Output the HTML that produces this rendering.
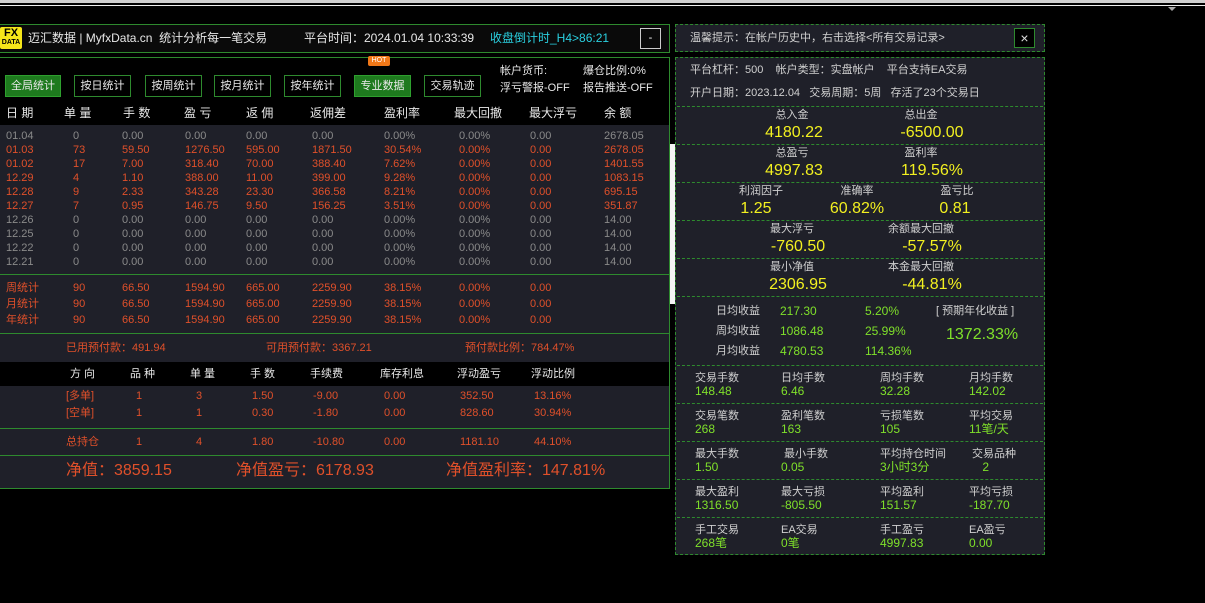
<!DOCTYPE html>
<html><head><meta charset="utf-8"><style>
*{margin:0;padding:0;box-sizing:border-box}
body{width:1205px;height:603px;background:#000;position:relative;overflow:hidden;font-family:"Liberation Sans","Noto Sans CJK SC",sans-serif;font-size:11px;color:#ddd}
.a{position:absolute;white-space:nowrap;line-height:1}
.g{color:#8a8a8a}.r{color:#e0502a}.w{color:#e8e8e8}.y{color:#f2f020}.gr{color:#7fe02a}.l{color:#d0d0d0}
.btn{position:absolute;top:75px;height:22px;width:57px;border:1px solid #2e8a2e;color:#e8e8e8;font-size:11px;text-align:center;line-height:20px;background:#000}
.btn.on{background:#1e7a1e;border-color:#2ea02e}
.hl{position:absolute;left:0;width:669px;height:1px;background:#2e8a2e}
.dl{position:absolute;left:677px;width:366px;border-top:1px dashed #2e8a2e;height:0}
.c{transform:translateX(-50%)}
</style></head><body>
<div class="a" style="left:0;top:0;width:1205px;height:3px;background:#cfcfcf"></div>
<div class="a" style="left:0;top:5px;width:1205px;height:1px;background:#eee"></div>
<div class="a" style="left:1168px;top:7px;width:0;height:0;border-left:4px solid transparent;border-right:4px solid transparent;border-top:4px solid #aaa"></div>

<div class="a" style="left:0;top:24px;width:670px;height:29px;border:1px solid #2e8a2e;border-left:none;background:#0a0a0a"></div>
<div class="a" style="left:0;top:27px;width:22px;height:22px;background:#f5e61a;border-radius:2px;color:#000;font-weight:bold;text-align:center">
<div style="font-size:11px;line-height:11px;margin-top:1px">FX</div><div style="font-size:7px;line-height:8px">DATA</div></div>
<div class="a w" style="left:28px;top:32px;font-size:12px">迈汇数据 | MyfxData.cn &nbsp;统计分析每一笔交易</div>
<div class="a w" style="left:304px;top:32px;font-size:12px">平台时间：2024.01.04 10:33:39</div>
<div class="a" style="left:490px;top:32px;font-size:12px;color:#2ad0e0">收盘倒计时_H4&gt;86:21</div>
<div class="a" style="left:640px;top:28px;width:21px;height:21px;border:1px solid #ccc;color:#fff;text-align:center;line-height:19px">-</div>

<div class="a" style="left:0;top:57px;width:670px;height:44px;border:1px solid #2e8a2e;border-left:none;border-bottom:none;background:#000"></div>
<div class="btn on" style="left:5px;width:56px">全局统计</div>
<div class="btn" style="left:74px">按日统计</div>
<div class="btn" style="left:145px">按周统计</div>
<div class="btn" style="left:214px">按月统计</div>
<div class="btn" style="left:284px">按年统计</div>
<div class="btn on" style="left:354px">专业数据</div>
<div class="a" style="left:368px;top:56px;width:22px;height:10px;background:#f07818;color:#fff;font-size:7px;text-align:center;line-height:10px;border-radius:2px">HOT</div>
<div class="btn" style="left:424px">交易轨迹</div>
<div class="a w" style="left:500px;top:66px">帐户货币:</div>
<div class="a w" style="left:583px;top:66px">爆仓比例:0%</div>
<div class="a w" style="left:500px;top:83px">浮亏警报-OFF</div>
<div class="a w" style="left:583px;top:83px">报告推送-OFF</div>

<div class="a" style="left:0;top:101px;width:669px;height:24px;background:#000"></div>
<div class="a w" style="left:6px;top:107px;font-size:12px">日 期</div>
<div class="a w" style="left:64px;top:107px;font-size:12px">单 量</div>
<div class="a w" style="left:123px;top:107px;font-size:12px">手 数</div>
<div class="a w" style="left:184px;top:107px;font-size:12px">盈 亏</div>
<div class="a w" style="left:246px;top:107px;font-size:12px">返 佣</div>
<div class="a w" style="left:310px;top:107px;font-size:12px">返佣差</div>
<div class="a w" style="left:384px;top:107px;font-size:12px">盈利率</div>
<div class="a w" style="left:454px;top:107px;font-size:12px">最大回撤</div>
<div class="a w" style="left:529px;top:107px;font-size:12px">最大浮亏</div>
<div class="a w" style="left:604px;top:107px;font-size:12px">余 额</div>

<div class="a" style="left:0;top:125px;width:669px;height:363px;background:#1f2029"></div>
<div class="a" style="left:669px;top:57px;width:1px;height:432px;background:#2e8a2e"></div>
<div class="a" style="left:670px;top:144px;width:5px;height:160px;background:#f4f4f4"></div>
<div class="hl" style="top:274px"></div>
<div class="hl" style="top:333px"></div>
<div class="a" style="left:0;top:362px;width:669px;height:24px;background:#000"></div>
<div class="hl" style="top:428px"></div>
<div class="hl" style="top:455px"></div>
<div class="hl" style="top:488px"></div>

<div id="rows"></div>
<div class="a r" style="left:66px;top:343px">已用预付款：491.94</div>
<div class="a r" style="left:266px;top:343px">可用预付款：3367.21</div>
<div class="a r" style="left:465px;top:343px">预付款比例：784.47%</div>

<div class="a w" style="left:70px;top:369px">方 向</div>
<div class="a w" style="left:130px;top:369px">品 种</div>
<div class="a w" style="left:190px;top:369px">单 量</div>
<div class="a w" style="left:250px;top:369px">手 数</div>
<div class="a w" style="left:310px;top:369px">手续费</div>
<div class="a w" style="left:380px;top:369px">库存利息</div>
<div class="a w" style="left:457px;top:369px">浮动盈亏</div>
<div class="a w" style="left:531px;top:369px">浮动比例</div>
<div id="pos"></div>
<div class="a r" style="left:66px;top:463px;font-size:16px">净值：3859.15</div>
<div class="a r" style="left:236px;top:463px;font-size:16px">净值盈亏：6178.93</div>
<div class="a r" style="left:446px;top:463px;font-size:16px">净值盈利率：147.81%</div>

<div class="a" style="left:675px;top:24px;width:370px;height:28px;border:1px dashed #2e8a2e;background:#1f2029"></div>
<div class="a l" style="left:690px;top:33px">温馨提示：在帐户历史中，右击选择&lt;所有交易记录&gt;</div>
<div class="a" style="left:1014px;top:28px;width:21px;height:20px;border:1px solid #2e8a2e;background:#000;color:#ddd;text-align:center;line-height:18px;font-size:14px">×</div>
<div class="a" style="left:675px;top:57px;width:370px;height:498px;border:1px dashed #2e8a2e;background:#1f2029"></div>
<div class="a l" style="left:690px;top:65px">平台杠杆：500 &nbsp;&nbsp;&nbsp;帐户类型：实盘帐户 &nbsp;&nbsp;&nbsp;平台支持EA交易</div>
<div class="a l" style="left:690px;top:88px">开户日期：2023.12.04 &nbsp;&nbsp;交易周期：5周 &nbsp;&nbsp;存活了23个交易日</div>
<div class="dl" style="top:106px"></div>
<div class="dl" style="top:144px"></div>
<div class="dl" style="top:182px"></div>
<div class="dl" style="top:220px"></div>
<div class="dl" style="top:258px"></div>
<div class="dl" style="top:296px"></div>
<div class="dl" style="top:365px"></div>
<div class="dl" style="top:403px"></div>
<div class="dl" style="top:441px"></div>
<div class="dl" style="top:479px"></div>
<div class="dl" style="top:517px"></div>
<div id="big"></div>

<div class="a l" style="left:716px;top:306px">日均收益</div>
<div class="a l" style="left:716px;top:326px">周均收益</div>
<div class="a l" style="left:716px;top:346px">月均收益</div>
<div class="a gr" style="left:780px;top:305px;font-size:12px">217.30</div>
<div class="a gr" style="left:780px;top:325px;font-size:12px">1086.48</div>
<div class="a gr" style="left:780px;top:345px;font-size:12px">4780.53</div>
<div class="a gr" style="left:865px;top:305px;font-size:12px">5.20%</div>
<div class="a gr" style="left:865px;top:325px;font-size:12px">25.99%</div>
<div class="a gr" style="left:865px;top:345px;font-size:12px">114.36%</div>
<div class="a l" style="left:936px;top:306px">[ 预期年化收益 ]</div>
<div class="a gr" style="left:946px;top:327px;font-size:16px">1372.33%</div>
<div id="grid"></div>

<script>
function add(id,h){document.getElementById(id).insertAdjacentHTML('beforeend',h)}
var X=[6,73,122,185,246,312,384,459,530,604];
var R=[
['g','01.04','0','0.00','0.00','0.00','0.00','0.00%','0.00%','0.00','2678.05'],
['r','01.03','73','59.50','1276.50','595.00','1871.50','30.54%','0.00%','0.00','2678.05'],
['r','01.02','17','7.00','318.40','70.00','388.40','7.62%','0.00%','0.00','1401.55'],
['r','12.29','4','1.10','388.00','11.00','399.00','9.28%','0.00%','0.00','1083.15'],
['r','12.28','9','2.33','343.28','23.30','366.58','8.21%','0.00%','0.00','695.15'],
['r','12.27','7','0.95','146.75','9.50','156.25','3.51%','0.00%','0.00','351.87'],
['g','12.26','0','0.00','0.00','0.00','0.00','0.00%','0.00%','0.00','14.00'],
['g','12.25','0','0.00','0.00','0.00','0.00','0.00%','0.00%','0.00','14.00'],
['g','12.22','0','0.00','0.00','0.00','0.00','0.00%','0.00%','0.00','14.00'],
['g','12.21','0','0.00','0.00','0.00','0.00','0.00%','0.00%','0.00','14.00']];
R.forEach(function(r,i){for(var j=1;j<r.length;j++)add('rows','<div class="a '+r[0]+'" style="left:'+X[j-1]+'px;top:'+(131+i*14)+'px">'+r[j]+'</div>')});
['周统计','月统计','年统计'].forEach(function(n,i){var v=[n,'90','66.50','1594.90','665.00','2259.90','38.15%','0.00%','0.00'];v.forEach(function(t,j){add('rows','<div class="a r" style="left:'+X[j]+'px;top:'+(283+i*16)+'px">'+t+'</div>')})});
var PX=[66,136,196,252,313,384,460,534];
[['[多单]','1','3','1.50','-9.00','0.00','352.50','13.16%',391],['[空单]','1','1','0.30','-1.80','0.00','828.60','30.94%',408],['总持仓','1','4','1.80','-10.80','0.00','1181.10','44.10%',437]].forEach(function(r){for(var j=0;j<8;j++)add('pos','<div class="a r" style="left:'+PX[j]+'px;top:'+r[8]+'px">'+r[j]+'</div>')});
var B=[[792,110,'总入金',794,'4180.22'],[921,110,'总出金',932,'-6500.00'],[792,148,'总盈亏',794,'4997.83'],[921,148,'盈利率',932,'119.56%'],
[761,186,'利润因子',756,'1.25'],[857,186,'准确率',857,'60.82%'],[957,186,'盈亏比',955,'0.81'],
[792,224,'最大浮亏',798,'-760.50'],[921,224,'余额最大回撤',932,'-57.57%'],[792,262,'最小净值',798,'2306.95'],[921,262,'本金最大回撤',932,'-44.81%']];
B.forEach(function(b){add('big','<div class="a l c" style="left:'+b[0]+'px;top:'+b[1]+'px">'+b[2]+'</div><div class="a y c" style="left:'+b[3]+'px;top:'+(b[1]+15)+'px;font-size:16px">'+b[4]+'</div>')});
var GX=[695,781,880,969];
var G=[[['交易手数','148.48'],['日均手数','6.46'],['周均手数','32.28'],['月均手数','142.02']],
[['交易笔数','268'],['盈利笔数','163'],['亏损笔数','105'],['平均交易','11笔/天']],
[['最大手数','1.50'],[' 最小手数','0.05'],['平均持仓时间','3小时3分'],[' 交易品种','&nbsp;&nbsp;&nbsp;&nbsp;2']],
[['最大盈利','1316.50'],['最大亏损','-805.50'],['平均盈利','151.57'],['平均亏损','-187.70']],
[['手工交易','268笔'],['EA交易','0笔'],['手工盈亏','4997.83'],['EA盈亏','0.00']]];
G.forEach(function(row,i){row.forEach(function(c,j){var y=373+i*38;add('grid','<div class="a l" style="left:'+GX[j]+'px;top:'+y+'px">'+c[0].replace(' ','&nbsp;')+'</div><div class="a gr" style="left:'+GX[j]+'px;top:'+(y+12)+'px;font-size:12px">'+c[1]+'</div>')})});
</script>
</body></html>
